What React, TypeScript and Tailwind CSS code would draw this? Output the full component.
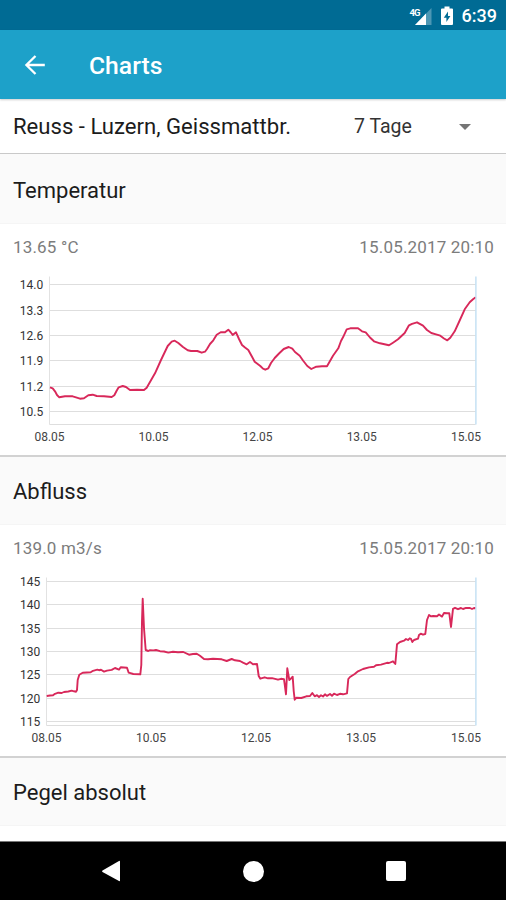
import { Fragment } from "react";

type Label = { text: string; pos: number };

interface ChartProps {
  left: number;
  rows: Label[];
  columns: Label[];
  points: string;
}

interface SectionProps extends ChartProps {
  title: string;
  value: string;
  date: string;
}

const temperature: SectionProps = {
  title: "Temperatur",
  value: "13.65 °C",
  date: "15.05.2017 20:10",
  left: 49.5,
  rows: [
    { text: "14.0", pos: 14.5 },
    { text: "13.3", pos: 40.5 },
    { text: "12.6", pos: 65.5 },
    { text: "11.9", pos: 90.5 },
    { text: "11.2", pos: 116.5 },
    { text: "10.5", pos: 141.5 },
  ],
  columns: [
    { text: "08.05", pos: 49.5 },
    { text: "10.05", pos: 153.5 },
    { text: "12.05", pos: 257.5 },
    { text: "13.05", pos: 361.7 },
    { text: "15.05", pos: 466 },
  ],
  points:
    "50,117.3 52.7,118.3 55,121.3 57,125 59.3,127.3 65,126.3 72.7,126.3 76,127.3 80,128.7 84,128.3 88.3,125.3 92.7,124.7 96.7,126 104,126.3 111.7,127 114.3,125.3 116.5,121 118.7,117.3 122.7,116 126,117 130,120 137,119.8 144,120 146.7,117.7 155,103.3 161,90 167.7,76 171.7,71.7 174.7,70.7 178.3,73 183,77 187.7,80.3 191,81 197.3,81 201.7,82.7 205,81.7 207,79 210,74 213.3,70.3 216.7,64.7 220.7,62.3 225,62.3 228.3,59.7 230.5,62 232.7,65 236,62.3 239,69 242,75 245,77.5 248.3,80 252.3,87.3 254.7,91.7 260.3,96 263,98.7 265.3,99.7 268.3,98.3 271,93 274.7,88 279,83.5 283.7,79 288.7,77 292.3,78.7 295,82 299.7,85.7 303,90.5 307.3,96 311.3,99 316.3,96.7 322,96.3 327,96.3 330,91 333,85.7 338.3,78.3 341,71 343,67.3 346.7,59.3 350.3,58.3 358,58.3 362,61.3 365.7,62.3 370,67.5 374,71.3 380,73.3 389,75.3 393,72.7 398,69.3 404.7,63 409,55.3 412,53.8 417,52.3 423,55.7 427,60 431.3,63 436,64.3 440.3,65.7 444,68.5 447.3,70.3 450.3,67.7 454.7,61.3 459,52 464.7,39.3 469.7,32.3 473,29.3 475.7,27.3",
};

const discharge: SectionProps = {
  title: "Abfluss",
  value: "139.0 m3/s",
  date: "15.05.2017 20:10",
  left: 46.5,
  rows: [
    { text: "145", pos: 10.5 },
    { text: "140", pos: 33.5 },
    { text: "135", pos: 57.5 },
    { text: "130", pos: 80.5 },
    { text: "125", pos: 103.5 },
    { text: "120", pos: 127.5 },
    { text: "115", pos: 150.5 },
  ],
  columns: [
    { text: "08.05", pos: 46.5 },
    { text: "10.05", pos: 151 },
    { text: "12.05", pos: 256 },
    { text: "13.05", pos: 361 },
    { text: "15.05", pos: 466 },
  ],
  points:
    "46.7,125 50,124.5 53,124.3 55,122.8 58.3,121.7 61.7,122 64,121 68.3,120.5 71.7,119.7 74,120.3 76,120.7 77,119 77.7,109 79.3,103.7 82.7,101.7 90.7,101.3 93,99.8 97.3,98.7 99,99.2 101,98.8 104,100.6 107,99.6 111.7,98.9 115,97 119,98.6 120.7,96.3 127,96.7 128.7,101.7 133.3,103 140.3,103.3 141.3,94 142,50 142.7,27.8 144,57.3 145.7,79 148.3,80 150,79.2 153.3,79.4 156,79 160,80.2 164,80.5 168.3,81.6 173,80.8 178,81.2 183.3,81 189,83.7 193,83 196.7,82.7 200,84.8 204,88 208,88.3 213,87.8 221.7,88.3 226.7,90 231.7,88 235,89.3 240,90 243,91.7 246.7,93.3 250,91 253,93.3 257,93 258.7,105 260.3,107.7 264.7,106.3 268,107.3 272,107.2 278,108.7 281,107.8 284,108.3 284.8,114 286,123.3 287.3,97.3 289.3,109 291,107.5 292.7,105.7 293.7,120 294.7,128.7 296.5,126.7 301.3,127 306.3,125.3 310,125 312.3,122 314.7,125.3 317,124.2 319,126 321,124.3 323,125.5 325,123.3 327,124.9 330,123 332,124.8 334,122.6 337,124 340,122.8 343,123.3 347,122.3 348.3,108 350,106 354.7,103 358,100.3 363,98 369,96.4 374,95.8 376,94.3 381,93.6 387,91.8 389,92 393,90.3 395.3,93 396,85 397,73.3 400,71 404,69.7 406,68 408,69 409.7,67.3 411,67.8 412.3,71 414,69 418,67.7 419,64 420.7,62.7 423,63.7 425.3,63 427,49 429,44 431,45.4 433,45 437,45.3 439,43.5 442,45.6 444,42 447,42.3 449.3,42.3 451,56 453,37.8 455,36.8 458,38.2 461,37 463,38 466,36.9 470,37 472,38 474,37 475.7,37.3",
};

function LineChart({ left, rows, columns, points }: ChartProps) {
  return (
    <svg
      viewBox="0 0 506 185"
      className="block h-[185px] w-full font-['Roboto',sans-serif] text-[12px]"
    >
      {rows.map((row) => (
        <Fragment key={row.text}>
          <line
            x1={left}
            x2="475.5"
            y1={row.pos}
            y2={row.pos}
            stroke="#dedede"
          />
          <text x="43.2" y={row.pos + 4} dx={left - 49.5} textAnchor="end" fill="#333">
            {row.text}
          </text>
        </Fragment>
      ))}
      <line x1={left} x2={left} y1="6.5" y2="154.5" stroke="#e2e2e2" />
      <line x1={left} x2="475.5" y1="154.5" y2="154.5" stroke="#dedede" />
      <polyline
        points={points}
        fill="none"
        stroke="#d8285a"
        strokeWidth="1.9"
        strokeLinejoin="round"
      />
      <line x1="475.9" x2="475.9" y1="6.5" y2="154.5" stroke="#bcdcf2" strokeWidth="1.3" />
      {columns.map((column) => (
        <text
          key={column.text}
          x={column.pos}
          y="170.5"
          textAnchor="middle"
          fill="#444"
        >
          {column.text}
        </text>
      ))}
    </svg>
  );
}

function SectionTitle({ title }: { title: string }) {
  return (
    <div className="flex h-[68px] items-center border-b border-[#f5f5f5] bg-[#fafafa] px-[13px] pt-px text-[22px] text-[#1c1c1c]">
      {title}
    </div>
  );
}

function Section({ title, value, date, ...chart }: SectionProps) {
  return (
    <section className="h-[301px] border-b-2 border-[#d2d2d2] bg-white">
      <SectionTitle title={title} />
      <div className="flex h-[46px] items-center justify-between pt-[2px] pr-3 pl-[13px] text-[17px] tracking-[0.17px] text-[#7c7c7c]">
        <span>{value}</span>
        <span>{date}</span>
      </div>
      <LineChart {...chart} />
    </section>
  );
}

function StatusBar() {
  return (
    <div className="flex h-[30px] shrink-0 items-center justify-end bg-[#006b94] pt-px pr-[9px] text-white">
      <svg viewBox="0 0 24 20" className="mr-[8px] h-5 w-6">
        <path d="M23.500 2v17H7z" fill="#4c97b4" />
        <path d="M18 7.500V19H7z" fill="#fff" />
        <text x="1.500" y="9.500" fontSize="9.5" fontWeight="700" letterSpacing="-0.9" fill="#fff">
          4G
        </text>
      </svg>
      <svg viewBox="0 0 14 20" className="mr-[8px] h-5 w-3.5">
        <path d="M4.500 0.500h5v2H12q1 0 1 1V18q0 1-1 1H2q-1 0-1-1V3.500q0-1 1-1h2.500z" fill="#fff" />
        <path d="M8 5.500 3.800 11.700h2.600v4.300l4-6H8z" fill="#006b94" />
      </svg>
      <span className="text-[18px] font-medium">6:39</span>
    </div>
  );
}

export default function App() {
  return (
    <div className="flex h-[900px] w-[506px] flex-col overflow-hidden bg-white font-['Roboto',sans-serif]">
      <StatusBar />

      {/* App bar */}
      <header className="z-10 flex h-[69px] shrink-0 items-center bg-[#1da1c9] pl-[24px] text-white shadow-[0_1px_2px_rgba(0,0,0,0.2)]">
        <svg viewBox="0 0 22 22" className="h-[22px] w-[22px]">
          <path
            d="M20.800 11H2.700M11.500 2 2.400 11l9.100 9"
            fill="none"
            stroke="#fff"
            strokeWidth="2.300"
          />
        </svg>
        <h1 className="ml-[43px] pt-[2px] text-[24.7px] font-medium">Charts</h1>
      </header>

      {/* Station and time range */}
      <div className="flex h-[55px] shrink-0 items-center border-b border-[#c9c9c9] pt-[2px] pl-[13px] text-[#1c1c1c]">
        <span className="w-[341px] text-[22.100px]">
          Reuss - Luzern, Geissmattbr.
        </span>
        <span className="w-[105px] text-[19.500px] text-[#333]">7 Tage</span>
        <svg viewBox="0 0 12 6" className="h-1.5 w-3">
          <path d="M0 0h12L6 6z" fill="#757575" />
        </svg>
      </div>

      {/* Measurements */}
      <main className="flex-1 overflow-hidden bg-[#fafafa] pt-[2px]">
        <Section {...temperature} />
        <Section {...discharge} />
        <SectionTitle title="Pegel absolut" />
        <div className="h-4 bg-white" />
      </main>

      {/* Android navigation */}
      <nav className="flex h-[59px] shrink-0 items-center justify-between border-t border-[#777] bg-black px-[101px]">
        <svg viewBox="0 0 20 22" className="h-[22px] w-5">
          <path d="M19 1.500v19q0 1-1 .6L1.500 12q-1-.8 0-1.600L18 1q1-.5 1 .5z" fill="#fff" />
        </svg>
        <span className="h-[21px] w-[21px] rounded-full bg-white" />
        <span className="mr-[-1px] h-5 w-5 rounded-[2px] bg-white" />
      </nav>
    </div>
  );
}
